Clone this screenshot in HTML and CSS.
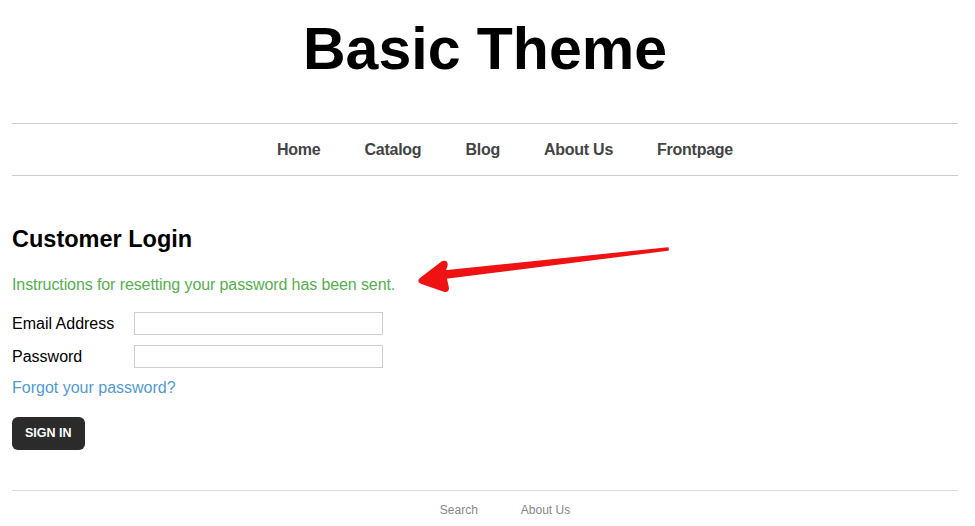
FILE: index.html
```html
<!DOCTYPE html>
<html>
<head>
<meta charset="utf-8">
<title>Basic Theme</title>
<link rel="stylesheet" href="styles.css">
</head>
<body>
<div class="page">
  <header class="site-header">
    <h1 class="site-title">Basic Theme</h1>
  </header>
  <nav class="main-nav">
    <ul class="nav-list">
      <li><a href="#">Home</a></li>
      <li><a href="#">Catalog</a></li>
      <li><a href="#">Blog</a></li>
      <li><a href="#">About Us</a></li>
      <li><a href="#">Frontpage</a></li>
    </ul>
  </nav>
  <main class="content">
    <h2 class="page-title">Customer Login</h2>
    <p class="notice">Instructions for resetting your password has been sent.</p>
    <form class="login-form">
      <div class="form-row">
        <label class="form-label" for="email">Email Address</label>
        <input class="form-input" id="email" type="email">
      </div>
      <div class="form-row">
        <label class="form-label" for="password">Password</label>
        <input class="form-input" id="password" type="password">
      </div>
      <a class="forgot-link" href="#">Forgot your password?</a>
      <button class="btn-signin" type="button">SIGN IN</button>
    </form>
  </main>
  <footer class="site-footer">
    <ul class="footer-list">
      <li><a href="#">Search</a></li>
      <li><a href="#">About Us</a></li>
    </ul>
  </footer>
</div>
<svg class="callout-arrow" width="975" height="526" viewBox="0 0 975 526">
  <path d="M668,248 L445,271 L447,265 Q447,260 442,262 L421,278 Q417,281 421,283 L444,291 Q449,292 448,287 L446,278 L668,250 Z" fill="#f01212" stroke="#f01212" stroke-width="1.5" stroke-linejoin="round"/>
</svg>
</body>
</html>
```

FILE: styles.css
```css
* { box-sizing: border-box; }

html, body {
  margin: 0;
  padding: 0;
  background: #fff;
}

body {
  font-family: "Liberation Sans", Arial, sans-serif;
  color: #000;
  position: relative;
  width: 975px;
  height: 526px;
  overflow: hidden;
}

.page {
  padding: 0 17px 0 12px;
}

.site-header {
  padding-top: 20px;
  padding-bottom: 44px;
}

.site-title {
  margin: 0;
  font-size: 59px;
  line-height: 59px;
  font-weight: bold;
  text-align: center;
  color: #000;
}

.main-nav {
  border-top: 1px solid #cccccc;
  border-bottom: 1px solid #cccccc;
}

.nav-list {
  list-style: none;
  margin: 0;
  padding: 0 0 0 40px;
  display: flex;
  justify-content: center;
}

.nav-list li {
  margin: 0 22px;
}

.nav-list a {
  display: block;
  line-height: 51px;
  font-size: 16px;
  font-weight: bold;
  letter-spacing: -0.25px;
  color: #444;
  text-decoration: none;
}

.content {
  padding-top: 49px;
}

.page-title {
  margin: 0;
  font-size: 23.5px;
  line-height: 28px;
  font-weight: bold;
}

.notice {
  margin: 22px 0 0;
  font-size: 16px;
  line-height: 20px;
  letter-spacing: -0.1px;
  color: #55b04f;
}

.login-form {
  margin-top: 17px;
  display: flex;
  flex-direction: column;
  align-items: flex-start;
}

.form-row {
  display: flex;
  align-items: center;
  height: 23px;
  margin-bottom: 10px;
}

.form-label {
  width: 122px;
  font-size: 16px;
  line-height: 20px;
}

.form-input {
  width: 249px;
  height: 23px;
  margin: 0;
  border: 1px solid #cfcfcf;
  background: #fff;
  padding: 2px 4px;
}

.forgot-link {
  margin-top: 0;
  font-size: 16px;
  line-height: 20px;
  color: #4f9bd3;
  text-decoration: none;
}

.btn-signin {
  margin-top: 19px;
  height: 33px;
  padding: 0 13px;
  border: 0;
  border-radius: 6px;
  background: #2b2b2b;
  color: #fff;
  font-family: "Liberation Sans", Arial, sans-serif;
  font-size: 12.5px;
  font-weight: bold;
  line-height: 33px;
}

.site-footer {
  margin-top: 40px;
  border-top: 1px solid #dddddd;
  padding-top: 9px;
}

.footer-list {
  list-style: none;
  margin: 0;
  padding: 0 0 0 40px;
  display: flex;
  justify-content: center;
  gap: 43px;
}

.footer-list a {
  font-size: 12px;
  line-height: 16px;
  color: #888;
  text-decoration: none;
}

.callout-arrow {
  position: absolute;
  left: 0;
  top: 0;
  pointer-events: none;
}
```
